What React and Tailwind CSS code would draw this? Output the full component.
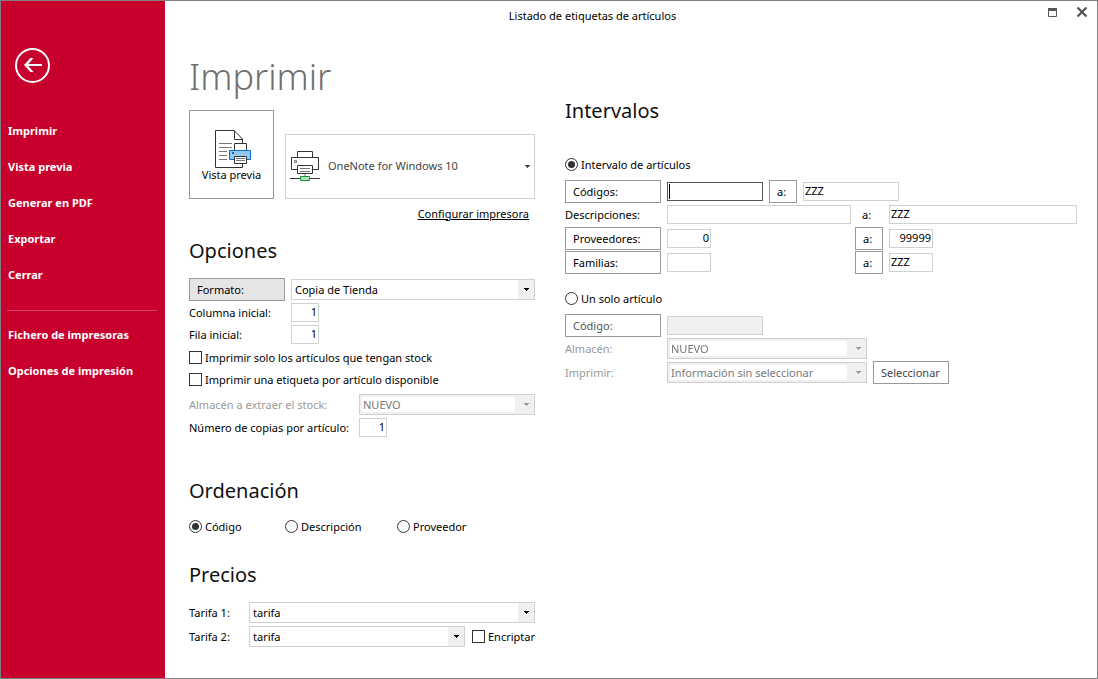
import React, { useState } from "react";

const mainLinks = ["Imprimir", "Vista previa", "Generar en PDF", "Exportar", "Cerrar"];
const configLinks = ["Fichero de impresoras", "Opciones de impresión"];

const PreviewIcon = () => (
  <svg width="41" height="38" viewBox="-4 0 41 38" fill="none" aria-hidden="true">
    <path d="M27.5 14V9L19 .5H.5V37.5H27.5V33" fill="#fff" stroke="#333" />
    <path d="M19.5 .5V9.5H27.5" stroke="#333" />
    <path d="M4 13.5H17M4 17.5H17M4 21.5H12M4 25.5H12M4 29.5H12" stroke="#777" />
    <path d="M19.5 20V13.5H31.5V20" fill="#fff" stroke="#333" />
    <path d="M14.5 20.5H35.5V29.5H14.5Z" fill="#92c9f2" stroke="#0f6cbd" />
    <path d="M17 22H19V24H17Z" fill="#0f6cbd" />
    <path d="M19.5 26.5H31.5V33.5H19.5Z" fill="#fff" stroke="#333" />
    <path d="M21 28.5H30M21 30.5H30" stroke="#777" />
  </svg>
);

const NetworkPrinterIcon = () => (
  <svg width="30" height="31" viewBox="0 0 30 31" fill="none" aria-hidden="true">
    <path d="M7.5 6V.5H22.5V6" stroke="#333" />
    <path d="M7 18.5H1.5V6.5H28.5V18.5H23" stroke="#333" />
    <path d="M4.5 9.5H6.5V11.5H4.5Z" stroke="#777" />
    <path d="M7.5 14.5H22.5V22.5H7.5Z" stroke="#333" />
    <path d="M10 17.5H20M10 20.5H20" stroke="#777" />
    <path d="M15 23V26" stroke="#bbb" strokeWidth="2" />
    <path d="M0 27.5H30" stroke="#333" />
    <path d="M10.5 25.5H19.5V29.5H10.5Z" fill="#b5dfb5" stroke="#119944" />
  </svg>
);

const Caret = ({ className }) => (
  <svg width="5" height="3" viewBox="0 0 5 3" className={className} aria-hidden="true">
    <path d="M0 0H5V1H4V2H3V3H2V2H1V1H0Z" fill="currentColor" />
  </svg>
);

const Heading = ({ children, className }) => (
  <h2 className={`text-[20px] leading-[30px] text-[#111] ${className}`}>{children}</h2>
);

const Label = ({ children, id, className }) => (
  <label htmlFor={id} className={`shrink-0 pt-0.5 ${className}`}>
    {children}
  </label>
);

// Combo box with the arrow drawn on the right side
const Combo = ({ id, label, options, disabled, className }) => (
  <div
    className={`relative flex h-[21px] border border-[#d0d0d0] ${
      disabled ? "bg-[#f0f0f0] py-0.5 pl-0.5 pr-[19px]" : "bg-white"
    } ${className}`}
  >
    <select
      id={id}
      aria-label={label}
      disabled={disabled}
      className={`w-full appearance-none bg-white outline-none ${
        disabled ? "pl-px text-[#777]" : "pt-0.5 pl-[3px] text-black"
      }`}
    >
      {options.map((o) => (
        <option key={o}>{o}</option>
      ))}
    </select>
    <span
      className={`pointer-events-none absolute inset-y-0 right-0 flex w-4 items-center justify-center bg-[#f0f0f0] pl-px ${
        disabled ? "text-[#999]" : "text-black"
      }`}
    >
      <Caret />
    </span>
  </div>
);

const Field = ({ className, ...props }) => (
  <input
    type="text"
    className={`h-[19px] min-w-0 border border-[#d0d0d0] px-px pb-0.5 text-black outline-none focus:border-[#555] disabled:bg-[#f0f0f0] ${className}`}
    {...props}
  />
);

const PushButton = ({ children, className }) => (
  <button
    type="button"
    className={`h-[23px] shrink-0 border border-[#999] px-[7px] pt-0.5 text-left ${className}`}
  >
    {children}
  </button>
);

const Check = ({ children, className = "" }) => (
  <label className={`flex h-[21px] items-center gap-[3px] ${className}`}>
    <input
      type="checkbox"
      className="size-[13px] shrink-0 appearance-none border border-[#333] bg-white checked:bg-[#333]"
    />
    <span className="pt-0.5">{children}</span>
  </label>
);

const Radio = ({ children, name, checked, onChange, className = "" }) => (
  <label className={`flex h-[21px] items-center gap-[3px] ${className}`}>
    <input
      type="radio"
      name={name}
      checked={checked}
      onChange={onChange}
      className="size-[13px] shrink-0 appearance-none rounded-full border border-[#333] bg-white p-[2px] bg-clip-content checked:bg-[#333]"
    />
    <span className="pt-0.5">{children}</span>
  </label>
);

const Sidebar = () => (
  <aside className="w-[164px] shrink-0 bg-[#c8002d] font-bold text-white">
    <button
      type="button"
      aria-label="Volver"
      className="mt-[47px] ml-[14px] block size-[35px]"
    >
      <svg width="35" height="35" viewBox="0 0 35 35" fill="none" stroke="#fff">
        <circle cx="17.5" cy="17.5" r="16.5" strokeWidth="2" />
        <path d="M11 17H27" strokeWidth="2" />
        <path d="M18.5 10H15.5L9 17L15.5 24H18.5L12.5 17Z" fill="#fff" stroke="none" />
      </svg>
    </button>
    <nav className="mt-[30px]">
      {mainLinks.map((l) => (
        <a key={l} href="#" className="flex h-9 items-center pl-[7px]">
          {l}
        </a>
      ))}
      <hr className="mt-[17px] mr-2 mb-1.5 ml-1.5 border-[#d34562]" />
      {configLinks.map((l) => (
        <a key={l} href="#" className="flex h-9 items-center pl-[7px]">
          {l}
        </a>
      ))}
    </nav>
  </aside>
);

const PrintSettings = () => {
  const [order, setOrder] = useState("Código");

  return (
    <section className="w-[346px] shrink-0">
      <h1 className="text-[36px] leading-[48px] font-light text-[#707070]">Imprimir</h1>

      {/* Preview and printer */}
      <div className="mt-[9px] flex items-end gap-[11px]">
        <button
          type="button"
          className="flex h-[89px] w-[85px] flex-col items-center border border-[#999] pt-[19px]"
        >
          <PreviewIcon />
          <span className="leading-[14px]">Vista previa</span>
        </button>
        <button
          type="button"
          className="flex h-[65px] flex-1 items-center gap-2 border border-[#d0d0d0] px-1 text-left text-[#444]"
        >
          <NetworkPrinterIcon />
          <span className="flex-1">OneNote for Windows 10</span>
          <Caret />
        </button>
      </div>
      <div className="mt-[5px] flex h-5 items-center justify-end pr-1.5">
        <a href="#" className="underline">
          Configurar impresora
        </a>
      </div>

      <Heading className="mt-3">Opciones</Heading>
      <div className="mt-3 flex items-center gap-1.5">
        <PushButton className="w-24 bg-[#e5e5e5]">Formato:</PushButton>
        <Combo label="Formato" options={["Copia de Tienda"]} className="flex-1" />
      </div>
      <div className="mt-0.5 flex items-center">
        <Label id="columna" className="w-[102px]">Columna inicial:</Label>
        <Field id="columna" defaultValue="1" className="w-7 text-right" />
      </div>
      <div className="mt-[3px] flex items-center">
        <Label id="fila" className="w-[102px]">Fila inicial:</Label>
        <Field id="fila" defaultValue="1" className="w-7 text-right" />
      </div>
      <Check className="mt-[3px]">Imprimir solo los artículos que tengan stock</Check>
      <Check className="mt-px">Imprimir una etiqueta por artículo disponible</Check>
      <div className="mt-1 flex items-center">
        <Label id="almacenStock" className="w-[170px] text-[#999]">
          Almacén a extraer el stock:
        </Label>
        <Combo id="almacenStock" options={["NUEVO"]} disabled className="flex-1" />
      </div>
      <div className="mt-[3px] flex items-center">
        <Label id="copias" className="w-[170px]">Número de copias por artículo:</Label>
        <Field id="copias" defaultValue="1" className="w-7 text-right" />
      </div>

      <Heading className="mt-[39px]">Ordenación</Heading>
      <div className="mt-2.5 flex">
        <Radio
          name="orden"
          checked={order === "Código"}
          onChange={() => setOrder("Código")}
          className="w-24"
        >
          Código
        </Radio>
        <Radio
          name="orden"
          checked={order === "Descripción"}
          onChange={() => setOrder("Descripción")}
          className="w-28"
        >
          Descripción
        </Radio>
        <Radio
          name="orden"
          checked={order === "Proveedor"}
          onChange={() => setOrder("Proveedor")}
        >
          Proveedor
        </Radio>
      </div>

      <Heading className="mt-[23px]">Precios</Heading>
      <div className="mt-3 flex items-center">
        <Label id="tarifa1" className="w-[60px]">Tarifa 1:</Label>
        <Combo id="tarifa1" options={["tarifa"]} className="flex-1" />
      </div>
      <div className="mt-[3px] flex items-center">
        <Label id="tarifa2" className="w-[60px]">Tarifa 2:</Label>
        <Combo id="tarifa2" options={["tarifa"]} className="w-[216px]" />
        <Check className="ml-[7px]">Encriptar</Check>
      </div>
    </section>
  );
};

const Ranges = () => {
  const [mode, setMode] = useState("intervalo");

  return (
    <section className="min-w-0 flex-1">
      <Heading className="mt-[43px]">Intervalos</Heading>
      <Radio
        name="modo"
        checked={mode === "intervalo"}
        onChange={() => setMode("intervalo")}
        className="mt-7"
      >
        Intervalo de artículos
      </Radio>
      <div className="mt-[5px] flex items-center gap-1.5">
        <PushButton className="w-24">Códigos:</PushButton>
        <div className="relative flex w-24">
          <Field
            aria-label="Código desde"
            placeholder=" "
            autoFocus
            className="peer w-full placeholder-shown:caret-transparent"
          />
          {/* text cursor while the box is empty */}
          <span className="pointer-events-none absolute inset-y-0.5 left-0.5 hidden w-px bg-black peer-focus:peer-placeholder-shown:block" />
        </div>
        <PushButton className="w-7">a:</PushButton>
        <Field aria-label="Código hasta" defaultValue="ZZZ" className="w-24" />
      </div>
      <div className="mt-0.5 flex items-center gap-1.5">
        <Label id="descDesde" className="w-24">Descripciones:</Label>
        <Field id="descDesde" className="w-[184px] shrink-0" />
        <Label id="descHasta" className="w-[26px] pl-[5px]">a:</Label>
        <Field id="descHasta" defaultValue="ZZZ" className="flex-1" />
      </div>
      <div className="mt-[3px] flex items-center gap-1.5">
        <PushButton className="w-24">Proveedores:</PushButton>
        <div className="flex w-[182px]">
          <Field aria-label="Proveedor desde" defaultValue="0" className="w-11 text-right" />
        </div>
        <PushButton className="w-7">a:</PushButton>
        <Field aria-label="Proveedor hasta" defaultValue="99999" className="w-11 text-right" />
      </div>
      <div className="mt-px flex items-center gap-1.5">
        <PushButton className="w-24">Familias:</PushButton>
        <div className="flex w-[182px]">
          <Field aria-label="Familia desde" className="w-11" />
        </div>
        <PushButton className="w-7">a:</PushButton>
        <Field aria-label="Familia hasta" defaultValue="ZZZ" className="w-11" />
      </div>

      <Radio
        name="modo"
        checked={mode === "unico"}
        onChange={() => setMode("unico")}
        className="mt-3.5"
      >
        Un solo artículo
      </Radio>
      <div className="mt-[5px] flex items-center gap-1.5">
        <PushButton className="w-24 text-[#555]">Código:</PushButton>
        <Field aria-label="Código del artículo" disabled className="w-24" />
      </div>
      <div className="mt-px flex items-center gap-1.5">
        <Label id="almacen" className="w-24 text-[#999]">Almacén:</Label>
        <Combo id="almacen" options={["NUEVO"]} disabled className="w-[200px]" />
      </div>
      <div className="mt-0.5 flex items-center gap-1.5">
        <Label id="imprimir" className="w-24 text-[#999]">Imprimir:</Label>
        <Combo
          id="imprimir"
          options={["Información sin seleccionar"]}
          disabled
          className="w-[200px]"
        />
        <PushButton className="w-[76px] text-[#444]">Seleccionar</PushButton>
      </div>
    </section>
  );
};

const App = () => {
  return (
    <div className="flex min-h-screen border border-[#808080] bg-white font-['Noto_Sans','Open_Sans',sans-serif] text-[11px] text-black">
      <Sidebar />
      <div className="min-w-0 flex-1">
        <header className="flex h-10 items-start">
          <p className="flex-1 pt-[5px] text-center leading-5">
            Listado de etiquetas de artículos
          </p>
          <div className="flex w-[77px] items-center gap-5 pt-1.5 pl-7 text-[#555]">
            <button type="button" aria-label="Maximizar">
              <svg width="9" height="10" viewBox="0 -1 9 10" fill="none" stroke="currentColor">
                <path d="M.5 .5H8.5V8.5H.5Z" />
                <path d="M0 1.5H9" strokeWidth="3" />
              </svg>
            </button>
            <button type="button" aria-label="Cerrar">
              <svg width="10" height="10" viewBox="0 0 10 10" stroke="currentColor" strokeWidth="2.2">
                <path d="M.5 .5L9.5 9.5M9.5 .5L.5 9.5" />
              </svg>
            </button>
          </div>
        </header>
        <main className="flex gap-[30px] pt-3 pr-5 pl-6">
          <PrintSettings />
          <Ranges />
        </main>
      </div>
    </div>
  );
};

export default App;
